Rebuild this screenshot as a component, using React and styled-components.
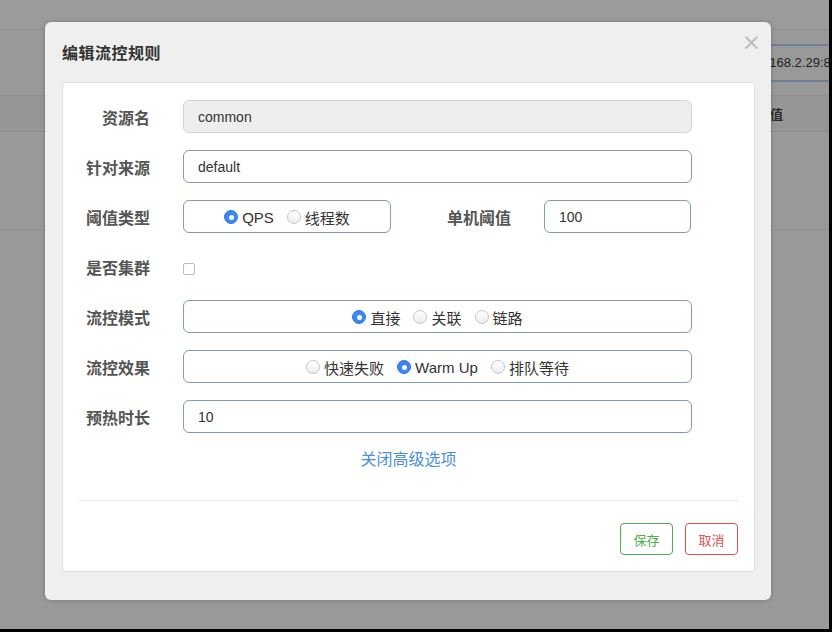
import React from 'react';
import styled, { createGlobalStyle } from 'styled-components';

const GlobalStyle = createGlobalStyle`
  html, body {
    margin: 0;
    padding: 0;
    background: #000;
  }
  body {
    font-family: "Liberation Sans", "Noto Sans CJK SC", sans-serif;
  }
`;

const cjk = `"Liberation Sans", "Noto Sans CJK SC", sans-serif`;

// page behind the overlay (already dimmed)
const Page = styled.div`
  position: relative;
  width: 829px;
  height: 629px;
  background: #999;
  overflow: hidden;
  display: flex;
  flex-direction: column;
`;

const TopBar = styled.div`
  height: 29px;
  background: #9b9b9b;
  border-bottom: 1px solid #909090;
`;

const Toolbar = styled.div`
  height: 65px;
  display: flex;
  align-items: center;
  padding-left: 722px;
`;

const HostInput = styled.div`
  flex: none;
  width: 160px;
  height: 34px;
  border-top: 2px solid #6f8198;
  border-bottom: 2px solid #6f8198;
  display: flex;
  align-items: center;
  padding-left: 22px;
  font-size: 13px;
  color: #1e1e1e;
  white-space: nowrap;
`;

const TableHead = styled.div`
  height: 35px;
  background: #969696;
  border-top: 1px solid #8f8f8f;
  border-bottom: 1px solid #8f8f8f;
  display: flex;
  align-items: center;
  justify-content: flex-end;
  padding-right: 46px;
  font-family: ${cjk};
  font-size: 13px;
  font-weight: 700;
  color: #2a2a2a;
`;

const TableRow = styled.div`
  height: 97px;
  border-bottom: 1px solid #8f8f8f;
`;

// modal
const Modal = styled.div`
  position: absolute;
  left: 45px;
  top: 22px;
  width: 726px;
  height: 578px;
  box-sizing: border-box;
  background: #efefef;
  border-radius: 6px;
  box-shadow: 0 0 4px rgba(0, 0, 0, 0.25);
  padding: 0 16px 28px 17px;
  display: flex;
  flex-direction: column;
`;

const Header = styled.div`
  height: 63px;
  display: flex;
  align-items: center;
  justify-content: space-between;
`;

const Title = styled.h4`
  margin: 0;
  font-family: ${cjk};
  font-size: 16px;
  font-weight: 700;
  color: #333;
  letter-spacing: 0.5px;
`;

const Close = styled.span`
  font-family: "DejaVu Sans", sans-serif;
  font-size: 23px;
  line-height: 1;
  color: #bcbcbc;
  margin: -20px -6px 0 0;
`;

const Panel = styled.div`
  flex: 1;
  background: #fff;
  border: 1px solid #dedede;
  border-radius: 3px;
  padding: 17px 16px 16px 0;
  display: flex;
  flex-direction: column;
`;

const Form = styled.div`
  display: flex;
  flex-direction: column;
  gap: 17px;
`;

const Row = styled.div`
  display: grid;
  grid-template-columns: 87px 509px;
  column-gap: 33px;
  align-items: center;
  height: 33px;
`;

const Label = styled.label`
  text-align: right;
  white-space: nowrap;
  font-family: ${cjk};
  font-size: 16px;
  font-weight: 700;
  color: #555;
`;

const Input = styled.div`
  flex: none;
  box-sizing: border-box;
  height: 33px;
  width: ${(p) => (p.$w ? `${p.$w}px` : 'auto')};
  border: 1px solid ${(p) => (p.$disabled ? '#d4d4d4' : '#7f9bc2')};
  background: ${(p) => (p.$disabled ? '#eee' : '#fff')};
  border-radius: 6px;
  padding: 0 14px;
  display: flex;
  align-items: center;
  font-size: 14px;
  color: #333;
`;

const RadioBox = styled(Input)`
  justify-content: center;
  gap: 13px;
  padding-top: 1px;
`;

const Inline = styled.div`
  display: flex;
  align-items: center;
`;

const SubLabel = styled(Label)`
  flex: none;
  margin-left: 56px;
  margin-right: 33px;
`;

const Option = styled.span`
  display: inline-flex;
  align-items: center;
  gap: 4px;
  white-space: nowrap;
  font-family: ${cjk};
  font-size: 15px;
  color: #333;
`;

const Dot = styled.span`
  width: 14px;
  height: 14px;
  box-sizing: border-box;
  border-radius: 50%;
  display: inline-flex;
  align-items: center;
  justify-content: center;
  background: ${(p) => (p.$on ? '#3a86f2' : 'linear-gradient(#fff, #ededed)')};
  border: 1px solid ${(p) => (p.$on ? '#2f79e6' : '#c6c6c6')};

  &::after {
    content: '';
    display: ${(p) => (p.$on ? 'block' : 'none')};
    width: 5px;
    height: 5px;
    border-radius: 50%;
    background: #fff;
  }
`;

const Check = styled.span`
  width: 12px;
  height: 12px;
  margin-top: 5px;
  box-sizing: border-box;
  border: 1px solid #bdbdbd;
  border-radius: 2px;
  background: #fff;
`;

const Toggle = styled.div`
  margin-top: 17px;
  text-align: center;
  font-family: ${cjk};
  font-size: 16px;
  line-height: 20px;
  color: #4a8fd6;
  padding-left: 16px;
`;

const Divider = styled.hr`
  margin: 30px 0 22px 16px;
  border: 0;
  border-top: 1px solid #e6e6e6;
`;

const Footer = styled.div`
  display: flex;
  justify-content: flex-end;
  gap: 12px;
`;

const Button = styled.button`
  height: 32px;
  width: 53px;
  box-sizing: border-box;
  background: #fff;
  border: 1px solid ${(p) => p.$color};
  color: ${(p) => p.$color};
  border-radius: 4px;
  font-family: ${cjk};
  font-size: 13px;
  padding: 0;
`;

function Radio({ on, children }) {
  return (
    <Option>
      <Dot $on={on} />
      {children}
    </Option>
  );
}

export default function App() {
  return (
    <>
      <GlobalStyle />
      <Page>
        <TopBar />
        <Toolbar>
          <HostInput>192.168.2.29:8</HostInput>
        </Toolbar>
        <TableHead>值</TableHead>
        <TableRow />

        <Modal>
          <Header>
            <Title>编辑流控规则</Title>
            <Close>×</Close>
          </Header>
          <Panel>
            <Form>
              <Row>
                <Label>资源名</Label>
                <Input $disabled>common</Input>
              </Row>
              <Row>
                <Label>针对来源</Label>
                <Input>default</Input>
              </Row>
              <Row>
                <Label>阈值类型</Label>
                <Inline>
                  <RadioBox $w={208}>
                    <Radio on>QPS</Radio>
                    <Radio>线程数</Radio>
                  </RadioBox>
                  <SubLabel>单机阈值</SubLabel>
                  <Input $w={147}>100</Input>
                </Inline>
              </Row>
              <Row>
                <Label>是否集群</Label>
                <Check />
              </Row>
              <Row>
                <Label>流控模式</Label>
                <RadioBox>
                  <Radio on>直接</Radio>
                  <Radio>关联</Radio>
                  <Radio>链路</Radio>
                </RadioBox>
              </Row>
              <Row>
                <Label>流控效果</Label>
                <RadioBox>
                  <Radio>快速失败</Radio>
                  <Radio on>Warm Up</Radio>
                  <Radio>排队等待</Radio>
                </RadioBox>
              </Row>
              <Row>
                <Label>预热时长</Label>
                <Input>10</Input>
              </Row>
            </Form>
            <Toggle>关闭高级选项</Toggle>
            <Divider />
            <Footer>
              <Button $color="#4cae4c">保存</Button>
              <Button $color="#d9534f">取消</Button>
            </Footer>
          </Panel>
        </Modal>
      </Page>
    </>
  );
}
